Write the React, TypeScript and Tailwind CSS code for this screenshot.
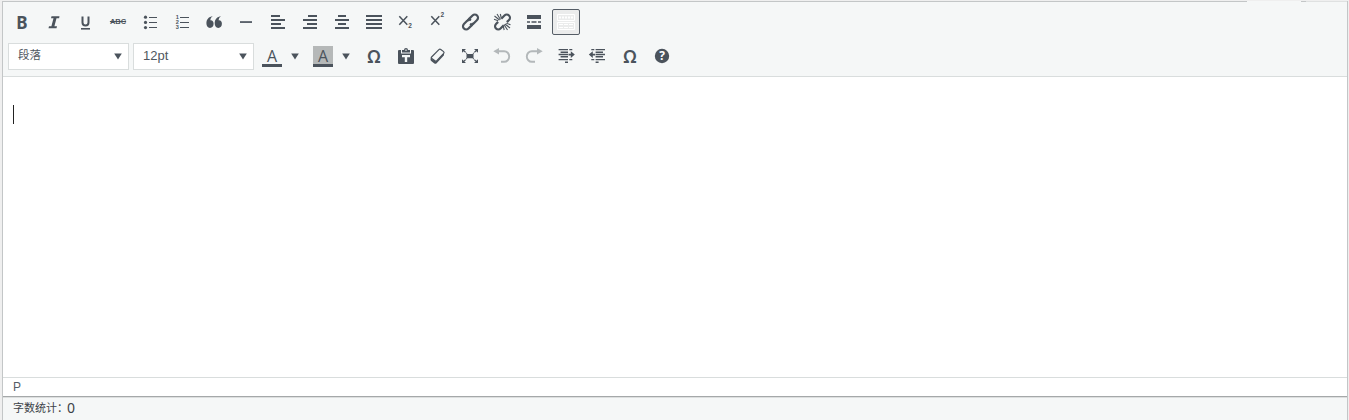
import type { ReactNode } from "react";

const Icon = ({ children, faded = false }: { children: ReactNode; faded?: boolean }) => (
  <svg viewBox="0 0 32 32" className={faded ? "block size-8 text-[#b3b8ba]" : "block size-8 text-[#4b535c]"} fill="currentColor" aria-hidden="true">
    {children}
  </svg>
);

const Btn = ({ children, label }: { children: ReactNode; label: string }) => (
  <button aria-label={label} className="flex size-8 shrink-0 items-center justify-center text-[#4b535c]">
    {children}
  </button>
);

const Lines = ({ rows }: { rows: number[][] }) => (
  <Icon>
    {rows.map(([x, y, w], i) => (
      <rect key={i} x={x} y={y} width={w} height={2} />
    ))}
  </Icon>
);

const Caret = () => (
  <svg viewBox="0 0 10 8" className="block h-2 w-[10px] text-[#4b535c]" fill="currentColor" aria-hidden="true">
    <path d="M1.2 1.5h7.6L5 7.5z" />
  </svg>
);

const Drop = () => (
  <button aria-label="color menu" className="flex h-8 w-[14px] items-center justify-center">
    <Caret />
  </button>
);

const Select = ({ children }: { children: ReactNode }) => (
  <button className="flex h-[27px] w-[121px] items-center justify-between border border-[#d9dddd] bg-white pr-[5px] pl-[9px] text-left text-[#50565e]">
    {children}
    <Caret />
  </button>
);

const Omega = () => (
  <Btn label="special character">
    <span className="font-['Noto_Sans',sans-serif] text-[18px] leading-none font-semibold">Ω</span>
  </Btn>
);

const Indent = ({ out = false }: { out?: boolean }) => (
  <Icon>
    <g transform={out ? "translate(31.6 0) scale(-1 1)" : undefined}>
      <path d="M8.6 9H18v1.3H8.6zM19.3 9h3v1.3h-3zM10.6 11.4H18V13h-7.4zM8.6 13.8H18v1.4H8.6zM10.6 16H18v1.5h-7.4zM8.6 19H18v1.3H8.6zM19.3 19h3v1.3h-3zM15 21.5h3V23h-3z" />
      <path d="M18.5 13.7h2.3v-2.4l4 3.3-4 3.3v-2.4h-2.3z" />
    </g>
  </Icon>
);

const Undo = () => (
  <g>
    <path d="M7.3 11.2 13 8v6.4z" />
    <path d="M12 11.2h6.2a5 5.3 0 0 1 0 10.6H15" fill="none" stroke="currentColor" strokeWidth="1.9" />
  </g>
);

export default function App() {
  return (
    <div className="h-[420px] overflow-hidden bg-[#efefef] pt-px pr-px pl-0.5 font-['Liberation_Sans','Noto_Sans_CJK_SC',sans-serif]">
      <div className="relative flex h-[419px] flex-col border-x border-t border-[#c3c6c7] bg-[#f5f7f7]">
        <div className="absolute -top-px right-[46px] h-px w-[54px] bg-[#f5f7f7]" />
        <div className="absolute -top-px right-0 h-px w-[41px] bg-[#dfe1e1]" />
        <div className="h-[75px] shrink-0 border-b border-[#d9dddd] pt-1 pl-[3px]">
          <div className="flex h-[34px]">
            <Btn label="bold">
              <span className="pt-px font-['Noto_Sans',sans-serif] text-[17px] leading-none font-bold">B</span>
            </Btn>
            <Btn label="italic">
              <Icon>
                <path d="M13.5 10.3h8l-.4 1.9h-2.6l-2.1 8h2.6l-.5 2h-8l.5-2h2.4l2.1-8H13z" />
              </Icon>
            </Btn>
            <Btn label="underline">
              <Icon>
                <path d="M12.5 10.5v6q0 3 3 3t3-3v-6" fill="none" stroke="currentColor" strokeWidth="2" />
                <path d="M11 22h9v1.6h-9z" />
              </Icon>
            </Btn>
            <Btn label="strikethrough">
              <span className="font-['Liberation_Sans',sans-serif] text-[7.5px] leading-none font-semibold line-through">ABC</span>
            </Btn>
            <Btn label="bullet list">
              <Icon>
                <circle cx="11.5" cy="11.2" r="1.6" />
                <circle cx="11.5" cy="16.4" r="1.6" />
                <circle cx="11.5" cy="21.6" r="1.6" />
                <path d="M15 11h8v1h-8zM15 16h8v1h-8zM15 21h8v1h-8z" />
              </Icon>
            </Btn>
            <Btn label="numbered list">
              <Icon>
                <g fontFamily="Liberation Sans, sans-serif" fontSize="5.6" fontWeight="700">
                  <text x="9.7" y="12.7">1</text>
                  <text x="9.7" y="17.9">2</text>
                  <text x="9.7" y="23.1">3</text>
                </g>
                <path d="M14 11h9v1h-9zM14 16h9v1h-9zM14 21h9v1h-9z" />
              </Icon>
            </Btn>
            <Btn label="quote">
              <Icon>
                <path d="M14.8 10.2c-1.7.9-2.5 2.4-2.4 4.2 1.9-.3 3.2 1.3 3.2 3.4 0 2.4-1.4 4.1-3.6 4.1-2.4 0-3.6-2-3.6-4.6 0-4 2.4-6.8 6.4-7.1z" />
                <path d="M23.1 10.2c-1.7.9-2.5 2.4-2.4 4.2 1.9-.3 3.2 1.3 3.2 3.4 0 2.4-1.4 4.1-3.6 4.1-2.4 0-3.6-2-3.6-4.6 0-4 2.4-6.8 6.4-7.1z" />
              </Icon>
            </Btn>
            <Btn label="horizontal line">
              <Icon><rect x="10" y="15.2" width="12" height="1.7" /></Icon>
            </Btn>
            <Btn label="align left"><Lines rows={[[9, 9, 9], [9, 13, 14], [9, 17, 10], [9, 21, 14]]} /></Btn>
            <Btn label="align right"><Lines rows={[[14, 9, 9], [9, 13, 14], [13, 17, 10], [9, 21, 14]]} /></Btn>
            <Btn label="align center"><Lines rows={[[12, 9, 8], [9, 13, 14], [12, 17, 8], [9, 21, 14]]} /></Btn>
            <Btn label="justify"><Lines rows={[[8, 9, 16], [8, 13, 16], [8, 17, 16], [8, 21, 16]]} /></Btn>
            <Btn label="subscript">
              <Icon>
                <path d="m9.3 10.3 8 8.5m0-8.5-8 8.5" fill="none" stroke="currentColor" strokeWidth="1.5" />
                <text x="18.3" y="21.5" fontFamily="Liberation Sans, sans-serif" fontSize="6.5" fontWeight="700">2</text>
              </Icon>
            </Btn>
            <Btn label="superscript">
              <Icon>
                <path d="m9.3 10.3 8 8.5m0-8.5-8 8.5" fill="none" stroke="currentColor" strokeWidth="1.5" />
                <text x="18.6" y="11.2" fontFamily="Liberation Sans, sans-serif" fontSize="6.5" fontWeight="700">2</text>
              </Icon>
            </Btn>
            <Btn label="insert link">
              <Icon>
                <g fill="none" stroke="currentColor" strokeWidth="2.2" transform="translate(.5 0) rotate(-45 16 16)">
                  <path d="M14.1 17.1a3.2 3.2 0 0 0 3.1 2.1h4.9a3.2 3.2 0 0 0 0-6.4h-4.9q-1.4 0-2.4 1" />
                  <path d="M17.9 14.9a3.2 3.2 0 0 0-3.1-2.1H9.9a3.2 3.2 0 0 0 0 6.4h4.9q1.4 0 2.4-1" />
                </g>
              </Icon>
            </Btn>
            <Btn label="remove link">
              <Icon>
                <g fill="none" stroke="currentColor" strokeWidth="2.2" transform="translate(.5 0) rotate(-45 16 16)">
                  <path d="M17.5 12.8H22a3.2 3.2 0 0 1 0 6.4h-3" />
                  <path d="M14.5 19.2H10a3.2 3.2 0 0 1 0-6.4h3" />
                </g>
                <path d="M8.5 10l5 4M11 8l3.5 5.5M14.3 8l1 4M8 13.3l4.2 1.4M24 22l-5-4M21.5 24 18 18.5M18.2 24l-1-4M24.5 18.7l-4.2-1.4" stroke="currentColor" strokeWidth="1.1" />
              </Icon>
            </Btn>
            <Btn label="page break">
              <Icon><path d="M9 9h14v4H9zM9 15.2h3v1.6H9zM13.5 15.2h5v1.6h-5zM20 15.2h3v1.6h-3zM9 19h14v4H9z" /></Icon>
            </Btn>
            <div className="flex h-8 w-8 items-start justify-center">
              <button aria-label="toggle toolbar" className="mt-[3px] flex h-[26px] w-7 items-center justify-center rounded-[2px] border border-[#555d66] bg-[#ebecec]">
                <svg viewBox="0 0 18 17" className="h-[17px] w-[18px]" fill="none" stroke="#fff" aria-hidden="true">
                  <path d="M.5.5h17v6H.5zM.5 8.5h17v7H.5z" />
                  <path d="M2 3.5h14" strokeWidth="2" strokeDasharray="2 1" />
                  <path d="M2 10.5h14M2 13.5h14" strokeDasharray="4 1" />
                </svg>
              </button>
            </div>
          </div>
          <div className="flex h-8 items-center pl-0.5">
            <Select><span className="text-[11.5px]">段落</span></Select>
            <span className="w-1" />
            <Select><span className="text-[13px]">12pt</span></Select>
            <span className="w-0.5" />
            <Btn label="text color">
              <span className="flex h-[21px] w-5 items-center justify-center border-b-[3px] border-[#4b535c] pt-[3px] font-['Open_Sans',sans-serif] text-base leading-none font-medium">A</span>
            </Btn>
            <Drop />
            <span className="w-[5px]" />
            <Btn label="background color">
              <span className="flex h-[21px] w-5 items-center justify-center border-b-[3px] border-[#4b535c] bg-[#b5b8b8] pt-[3px] font-['Open_Sans',sans-serif] text-base leading-none font-medium">A</span>
            </Btn>
            <Drop />
            <span className="w-[5px]" />
            <Omega />
            <Btn label="paste as text">
              <Icon>
                <path fillRule="evenodd" d="M9 10h2v3.5h10V10h2q1 0 1 1v12q0 1-1 1H9q-1 0-1-1V11q0-1 1-1zM12 15v2.2h2.8V22h2.4v-4.8H20V15z" />
                <path fillRule="evenodd" d="M12 10h2q0-2 2-2t2 2h2v2.5h-8zM15.3 9.5v1.2h1.4V9.5z" />
              </Icon>
            </Btn>
            <Btn label="clear formatting">
              <Icon>
                <path d="m9.6 17 7.3-7.3q.9-.9 1.9-.2l2.8 2.1q.9.8.1 1.8l-6.9 7.3q-.8.8-1.8.1l-3.2-2.2q-1-.7-.2-1.6z" fill="none" stroke="currentColor" strokeWidth="1.2" />
                <path d="M9 17.4q0 1 .9 1.6l3.2 2q1 .5 1.7-.3l7.2-7.7v2.2l-7.4 8q-1 1-2.2.2l-2.9-2.2q-1.7-1.3-.5-3.8z" />
              </Icon>
            </Btn>
            <Btn label="fullscreen">
              <Icon>
                <path d="M12.5 14h7v4.2h-7zM8 9h4l-4 3.8zM24 9h-4l4 3.8zM8 23h4l-4-3.8zM24 23h-4l4-3.8z" />
                <path d="m9 10 4 3.6M23 10l-4 3.6M9 22l4-3.6M23 22l-4-3.6" stroke="currentColor" strokeWidth="1.2" strokeDasharray="3.6 .8" />
              </Icon>
            </Btn>
            <Btn label="undo"><Icon faded><Undo /></Icon></Btn>
            <Btn label="redo"><Icon faded><g transform="translate(32 0) scale(-1 1)"><Undo /></g></Icon></Btn>
            <Btn label="increase indent"><Indent /></Btn>
            <Btn label="decrease indent"><Indent out /></Btn>
            <Omega />
            <Btn label="help">
              <Icon>
                <circle cx="16" cy="16" r="7.2" />
                <text x="16" y="20.3" textAnchor="middle" fill="#fff" fontFamily="Open Sans, sans-serif" fontWeight="700" fontSize="12">?</text>
              </Icon>
            </Btn>
          </div>
        </div>
        <div className="h-[300px] shrink-0 bg-white pt-[28px] pl-[10px]">
          <div className="h-[19px] w-px bg-[#222]" />
        </div>
        <div className="flex h-[20px] shrink-0 items-center border-t border-b border-t-[#d9dddd] border-b-[#a5a8a9] bg-white pl-[10px] text-xs leading-none text-[#555d66]">P</div>
        <div className="flex flex-1 items-start border-t border-[#dddfdf] pt-0.5 pl-[10px] text-[11px] leading-4 text-[#3c4248]">
          字数统计：<span className="-ml-px font-['Noto_Sans',sans-serif] text-[14px]">0</span>
        </div>
      </div>
    </div>
  );
}
